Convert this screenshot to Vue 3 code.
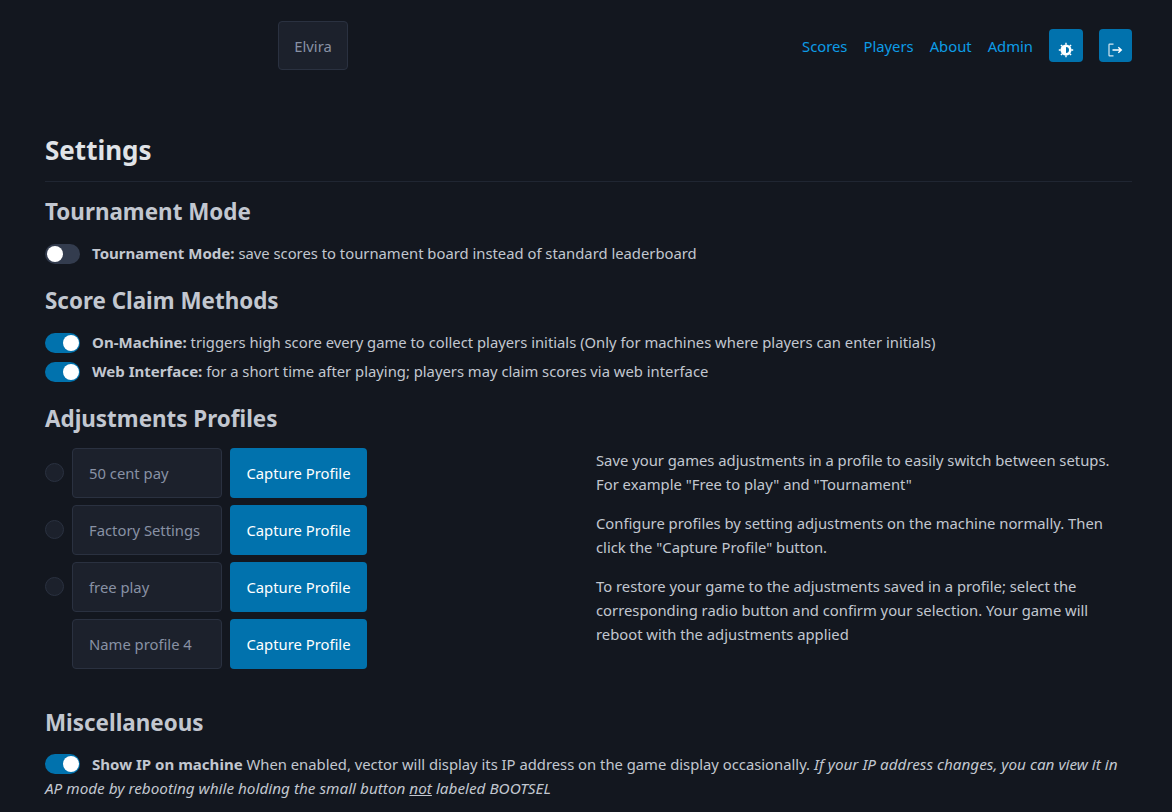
<script setup>
const profiles = [
  { value: '50 cent pay', radio: true },
  { value: 'Factory Settings', radio: true },
  { value: 'free play', radio: true },
  { value: 'Name profile 4', radio: false },
]
</script>

<template>
  <div class="page">
    <header class="top">
      <div class="brand"></div>
      <div class="machine">Elvira</div>
      <nav class="nav">
        <a>Scores</a>
        <a>Players</a>
        <a>About</a>
        <a>Admin</a>
        <button class="icon theme" aria-label="Theme">
          <svg width="16" height="16" viewBox="0 0 16 16">
            <circle cx="8" cy="8" r="5.500" fill="#fff" />
            <path d="M8 5a3 3 0 0 1 0 6z" fill="#0172ad" />
            <path d="M8 .8v2M8 13.200v2M.8 8h2M13.200 8h2M2.900 2.900l1.400 1.400M11.700 11.700l1.400 1.400M13.100 2.900l-1.400 1.400M4.300 11.700l-1.400 1.400" stroke="#fff" stroke-width="1.400" />
          </svg>
        </button>
        <button class="icon logout" aria-label="Log out">
          <svg width="16" height="16" viewBox="1 0 16 16" fill="none" stroke="#fff" stroke-width="1.200">
            <path d="M6.500 2.200H2.600a.6.6 0 0 0-.6.600v10.400a.6.6 0 0 0 .6.600h3.900" stroke="#d5e6f0" />
            <path d="M5.500 8h8.800M11.300 5.200 14.300 8l-3 2.800" stroke-width="1.400" />
          </svg>
        </button>
      </nav>
    </header>

    <main class="main">
      <h2 class="title">Settings</h2>
      <hr class="rule" />

      <h3>Tournament Mode</h3>
      <div class="opt first">
        <span class="toggle"></span>
        <span class="label"><b>Tournament Mode:</b> save scores to tournament board instead of standard leaderboard</span>
      </div>

      <h3 class="claim">Score Claim Methods</h3>
      <div class="opt first">
        <span class="toggle on"></span>
        <span class="label"><b>On-Machine:</b> triggers high score every game to collect players initials (Only for machines where players can enter initials)</span>
      </div>
      <div class="opt">
        <span class="toggle on"></span>
        <span class="label"><b>Web Interface:</b> for a short time after playing; players may claim scores via web interface</span>
      </div>

      <h3 class="adj">Adjustments Profiles</h3>
      <div class="profiles">
        <div class="rows">
          <div v-for="p in profiles" :key="p.value" class="row">
            <span class="radio" :class="{ hidden: !p.radio }"></span>
            <div class="field">{{ p.value }}</div>
            <button class="capture">Capture Profile</button>
          </div>
        </div>
        <div class="help">
          <p>Save your games adjustments in a profile to easily switch between setups. For example "Free to play" and "Tournament"</p>
          <p>Configure profiles by setting adjustments on the machine normally. Then click the "Capture Profile" button.</p>
          <p>To restore your game to the adjustments saved in a profile; select the corresponding radio button and confirm your selection. Your game will reboot with the adjustments applied</p>
        </div>
      </div>

      <h3 class="misc">Miscellaneous</h3>
      <div class="para">
        <span class="toggle on inline"></span>
        <b>Show IP on machine</b> When enabled, vector will display its IP address on the game display occasionally. <i>If your IP address changes, you can view it in AP mode by rebooting while holding the small button <u>not</u> labeled BOOTSEL</i>
      </div>
    </main>
  </div>
</template>

<style>
html, body { margin: 0; background: #13171f; }
</style>

<style scoped>
.page {
  height: 812px;
  overflow: hidden;
  box-sizing: border-box;
  padding: 0 40px 0 45px;
  background: #13171f;
  color: #c2c7d0;
  font-family: "Noto Sans", "Open Sans", sans-serif;
  font-size: 14.800px;
  line-height: 24px;
}
.top {
  display: flex;
  align-items: center;
  height: 91px;
}
.brand { width: 233px; }
.machine {
  box-sizing: border-box;
  width: 70px;
  height: 49px;
  display: flex;
  align-items: center;
  justify-content: center;
  background: #1c212c;
  border: 1px solid #2a3140;
  border-radius: 4px;
  color: #8891a4;
}
.nav {
  margin-left: auto;
  display: flex;
  align-items: center;
}
.nav a { margin-right: 16px; color: #0d9ce6; }
.icon {
  box-sizing: border-box;
  width: 34px;
  height: 33px;
  padding: 9px 0 0;
  display: flex;
  align-items: center;
  justify-content: center;
  background: #0172ad;
  border: 0;
  border-radius: 4px;
}
.logout { margin-left: 16px; width: 33px; }
.main { padding-top: 41px; }
h2, h3 { margin: 0; font-weight: 700; }
.title { font-size: 26px; line-height: 36px; color: #e0e3e7; }
.rule { height: 1px; border: 0; margin: 13px 0 0; background: #202632; }
h3 { font-size: 22.400px; line-height: 30px; margin-top: 15px; color: #c2c7d0; }
.opt { display: flex; align-items: center; height: 24px; white-space: nowrap; margin-top: 5px; }
.opt.first { margin-top: 15px; }
.label { padding-bottom: 2px; }
.claim { margin-top: 20px; }
.adj { margin-top: 20px; }
.misc { margin-top: 32px; }
b { font-weight: 700; font-size: 15.050px; }
i { font-size: 15.300px; }
.toggle {
  position: relative;
  flex: none;
  box-sizing: border-box;
  width: 35px;
  height: 20px;
  margin-right: 12px;
  border-radius: 10px;
  background: #333c4e;
}
.toggle::after {
  content: "";
  position: absolute;
  top: 2px;
  left: 2px;
  width: 16px;
  height: 16px;
  border-radius: 50%;
  background: #fff;
}
.toggle.on { background: #0172ad; }
.toggle.on::after { left: 18px; }
.toggle.inline { display: inline-block; vertical-align: -4px; }
.profiles { display: flex; margin-top: 14px; }
.rows { width: 551px; flex: none; }
.row { display: flex; align-items: center; gap: 8px; height: 49.500px; margin-bottom: 7.500px; }
.radio {
  box-sizing: border-box;
  width: 19px;
  height: 19px;
  border-radius: 50%;
  background: #1c212c;
  border: 1px solid #2a3140;
}
.radio.hidden { visibility: hidden; }
.field {
  box-sizing: border-box;
  width: 150px;
  height: 100%;
  padding: 0 16px;
  display: flex;
  align-items: center;
  white-space: nowrap;
  background: #1c212c;
  border: 1px solid #2a3140;
  border-radius: 4px;
  color: #8891a4;
}
.capture {
  width: 137px;
  height: 100%;
  padding: 0;
  background: #0172ad;
  border: 0;
  border-radius: 4px;
  color: #fff;
  font: inherit;
}
.help { flex: 1; }
.help p { margin: 0 0 15px; }
.para { margin-top: 14px; }
</style>
